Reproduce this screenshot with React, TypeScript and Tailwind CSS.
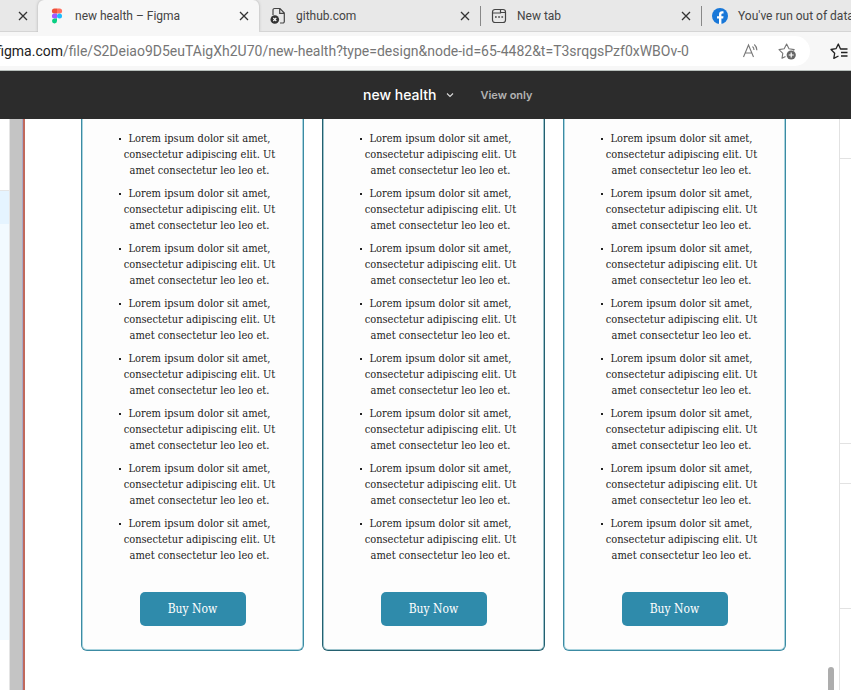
import React from "react";

const ui = "font-['Roboto','Open_Sans',sans-serif]";
const serif = "font-['DejaVu_Serif_Condensed','DejaVu_Serif',serif]";

const features = Array.from({ length: 8 }, (_, i) => i);
const plans = [
  { name: "basic", border: "border-[#3c8ba3] shadow-[inset_0_0_0_1px_#a9d3de]" },
  { name: "standard", border: "border-[#24606f] shadow-[inset_0_0_0_1px_#9cc3cc]" },
  { name: "premium", border: "border-[#3c8ba3] shadow-[inset_0_0_0_1px_#a9d3de]" },
];

function CloseButton() {
  return (
    <button aria-label="Close tab" className="flex size-4 shrink-0 items-center justify-center">
      <svg width="10" height="10" viewBox="0 0 10 10" fill="none" stroke="#333" strokeWidth="1.3">
        <path d="M1 1l8 8M9 1L1 9" />
      </svg>
    </button>
  );
}

function FigmaIcon() {
  return (
    <svg width="12" height="16" viewBox="0 0 12 16" className="shrink-0">
      <path d="M3.4 0.5H6v5H3.4a2.5 2.5 0 0 1 0-5z" fill="#f0503a" />
      <path d="M6 0.5h2.6a2.5 2.5 0 0 1 0 5H6z" fill="#ff7262" />
      <path d="M3.4 5.5H6v5H3.4a2.5 2.5 0 0 1 0-5z" fill="#a259ff" />
      <circle cx="8.5" cy="8" r="2.5" fill="#1abcfe" />
      <path d="M3.4 10.5H6V13a2.5 2.5 0 1 1-2.6-2.5z" fill="#0acf83" />
    </svg>
  );
}

function BrokenPageIcon() {
  return (
    <svg width="16" height="18" viewBox="0 0 16 18" fill="none" className="shrink-0">
      <path d="M3 8V3a1.5 1.5 0 0 1 1.5-1.5H10L14.3 6v8.5a1.5 1.5 0 0 1-1.5 1.5H10M9.7 1.7V6.3h4.4" stroke="#444" strokeWidth="1.2" />
      <circle cx="4.8" cy="12.5" r="4.3" fill="#333" />
      <path d="M3.3 11l3 3M6.3 11l-3 3" stroke="#fff" strokeWidth="1.1" />
    </svg>
  );
}

function NewTabIcon() {
  return (
    <svg width="16" height="16" viewBox="0 0 16 16" fill="none" stroke="#444" strokeWidth="1.2" className="shrink-0">
      <rect x="1.5" y="1.5" width="13" height="13" rx="2.5" />
      <path d="M2 5H9.5V1.5M9.5 4.5h5" />
      <path d="M4 9h1.7M7.2 9h1.7M10.4 9h1.7" strokeWidth="1.7" />
    </svg>
  );
}

function FacebookIcon() {
  return (
    <svg width="16" height="16" viewBox="0 0 16 16" className="shrink-0">
      <circle cx="8" cy="8" r="8" fill="#1877d8" />
      <path d="M7 16v-5.4H5V8.2h2V6.5C7 4.4 8.2 3.3 10 3.3c.8 0 1.5.1 1.5.1v2h-.9c-1 0-1.2.6-1.2 1.2v1.6h2.1l-.3 2.4H9.4V16z" fill="#fff" />
    </svg>
  );
}

function Tab({ icon, title, active, divider }: { icon: React.ReactNode; title: string; active?: boolean; divider?: boolean }) {
  return (
    <div
      className={`relative flex w-[221px] shrink-0 items-center gap-[10px] pr-[7px] pl-[11px] text-xs text-[#444] ${
        active ? "rounded-t-md bg-[#f7f7f7] shadow-[0_0_3px_#aaa]" : "border-b border-[#d5d5d5]"
      }`}
    >
      <span className="flex w-4 shrink-0 justify-center">{icon}</span>
      <span className="min-w-0 flex-1 whitespace-nowrap">{title}</span>
      <CloseButton />
      {divider && <span className="absolute top-[6px] -right-px h-5 w-px bg-[#888]" />}
    </div>
  );
}

function BrowserChrome() {
  return (
    <div className={ui}>
      <div className="flex h-8 overflow-hidden bg-[#e8e8e8]">
        <div className="flex w-[38px] shrink-0 items-center justify-end border-b border-[#d5d5d5] pr-[7px]">
          <CloseButton />
        </div>
        <Tab icon={<FigmaIcon />} title="new health – Figma" active />
        <Tab icon={<BrokenPageIcon />} title="github.com" divider />
        <Tab icon={<NewTabIcon />} title="New tab" divider />
        <Tab icon={<FacebookIcon />} title="You've run out of data" />
      </div>
      <div className="flex h-[39px] items-center border-b border-[#b8bfbc] bg-[#f7f7f7]">
        <div className="flex h-[30px] min-w-0 flex-1 items-center rounded-r-full bg-white pr-[14px] text-sm">
          <label htmlFor="url" className="flex w-[63px] shrink-0 justify-end overflow-hidden text-[#222]">
            <span>figma.com</span>
          </label>
          <input
            id="url"
            className="min-w-0 flex-1 bg-transparent text-[#767676] outline-none"
            defaultValue="/file/S2Deiao9D5euTAigXh2U70/new-health?type=design&node-id=65-4482&t=T3srqgsPzf0xWBOv-0"
          />
          <button aria-label="Read aloud" className="mr-[18px] shrink-0">
            <svg width="18" height="18" viewBox="0 0 18 18" fill="none" stroke="#777" strokeWidth="1.1">
              <path d="M1.5 15L6.5 3l5 12M3.2 11h6.6M10.5 4.5c1 .8 1.5 2 1.5 3.5M12.3 2.5c1.6 1.4 2.6 3.3 2.6 5.8" />
            </svg>
          </button>
          <button aria-label="Add to favorites" className="shrink-0">
            <svg width="18" height="18" viewBox="0 0 18 18" fill="none">
              <path d="M7.5 14.5L4 16.3l.8-5L1 7.6l5.2-.8L8.6 2l2.4 4.8 5.2.8-1 1" stroke="#777" strokeWidth="1.1" strokeLinejoin="round" />
              <circle cx="13.2" cy="13" r="4.6" fill="#666" />
              <path d="M13.2 10.5v5M10.7 13h5" stroke="#fff" strokeWidth="1.2" />
            </svg>
          </button>
        </div>
        <button aria-label="Favorites" className="mr-[3px] ml-5 shrink-0">
          <svg width="18" height="18" viewBox="0 0 18 18" fill="none" stroke="#222" strokeWidth="1.3" strokeLinejoin="round">
            <path d="M12.5 7H10.5L8.3 2 6 6.7l-5 .8 3.7 3.7-.9 5.1L8.5 14M10.5 7h7M11 10.5h6.5M11 14h6.5" />
          </svg>
        </button>
      </div>
    </div>
  );
}

function PlanCard({ name, border }: { name: string; border: string }) {
  return (
    <article aria-label={name} className={`flex flex-col items-center rounded-b-md border border-t-0 bg-[#fdfdfd] pt-5 pb-6 ${border}`}>
      <ul className="flex flex-col gap-[7px] pl-3 text-[11px] leading-4 text-[#222]">
        {features.map((i) => (
          <li key={i} className="flex">
            <span className="mt-[7px] size-[2px] shrink-0 bg-[#222]" />
            <p className="w-[158px] text-center">
              Lorem ipsum dolor sit amet,
              <br />
              consectetur adipiscing elit. Ut
              <br />
              amet consectetur leo leo et.
            </p>
          </li>
        ))}
      </ul>
      <button className="mt-7 h-[34px] w-[106px] rounded-[5px] bg-[#2f8bab] text-xs text-white">Buy Now</button>
    </article>
  );
}

export default function App() {
  return (
    <div className="flex h-screen flex-col overflow-hidden bg-white">
      <BrowserChrome />
      <header className="flex h-12 shrink-0 items-center bg-[#2c2c2c] pl-[363px] font-['Inter',sans-serif]">
        <button className="flex items-center gap-[10px] text-sm font-medium text-white">
          new health
          <svg width="8" height="6" viewBox="0 0 8 6" fill="none" stroke="#ddd" strokeWidth="1.1">
            <path d="M1 1.5l3 3 3-3" />
          </svg>
        </button>
        <span className="ml-[26px] text-[11px] font-semibold text-[#b3b3b3]">View only</span>
      </header>
      <div className="flex min-h-0 flex-1">
        <aside className="w-[10px] shrink-0 border-r border-[#e5e5e5]">
          <div className="h-[72px] border-b border-[#e5e5e5]" />
          <div className="h-[33px] bg-[#e5f4ff]" />
          <div className="h-[416px] bg-[#f2faff]" />
        </aside>
        <div className="w-[15px] shrink-0 border-r-2 border-[#c0695c] bg-[#c4c4c4]">
          <div className="ml-auto h-full w-px bg-[#a9a9c4]" />
        </div>
        <main className={`relative min-w-0 flex-1 overflow-hidden pr-[53px] pl-14 ${serif}`}>
          <div className="-mt-2 grid grid-cols-3 gap-[18px]">
            {plans.map((p) => (
              <PlanCard key={p.name} {...p} />
            ))}
          </div>
          <div className="absolute right-[5px] bottom-0 h-[23px] w-[6px] rounded-t-full bg-[#adadad]" />
        </main>
        <aside className="w-3 shrink-0 border-l border-[#e2e2e2]">
          <div className="h-10 border-b border-[#e2e2e2]" />
          <div className="h-[285px] border-b border-[#e2e2e2]" />
          <div className="h-10 border-b border-[#e2e2e2]" />
          <div className="h-[125px] border-b border-[#e2e2e2]" />
        </aside>
      </div>
    </div>
  );
}
